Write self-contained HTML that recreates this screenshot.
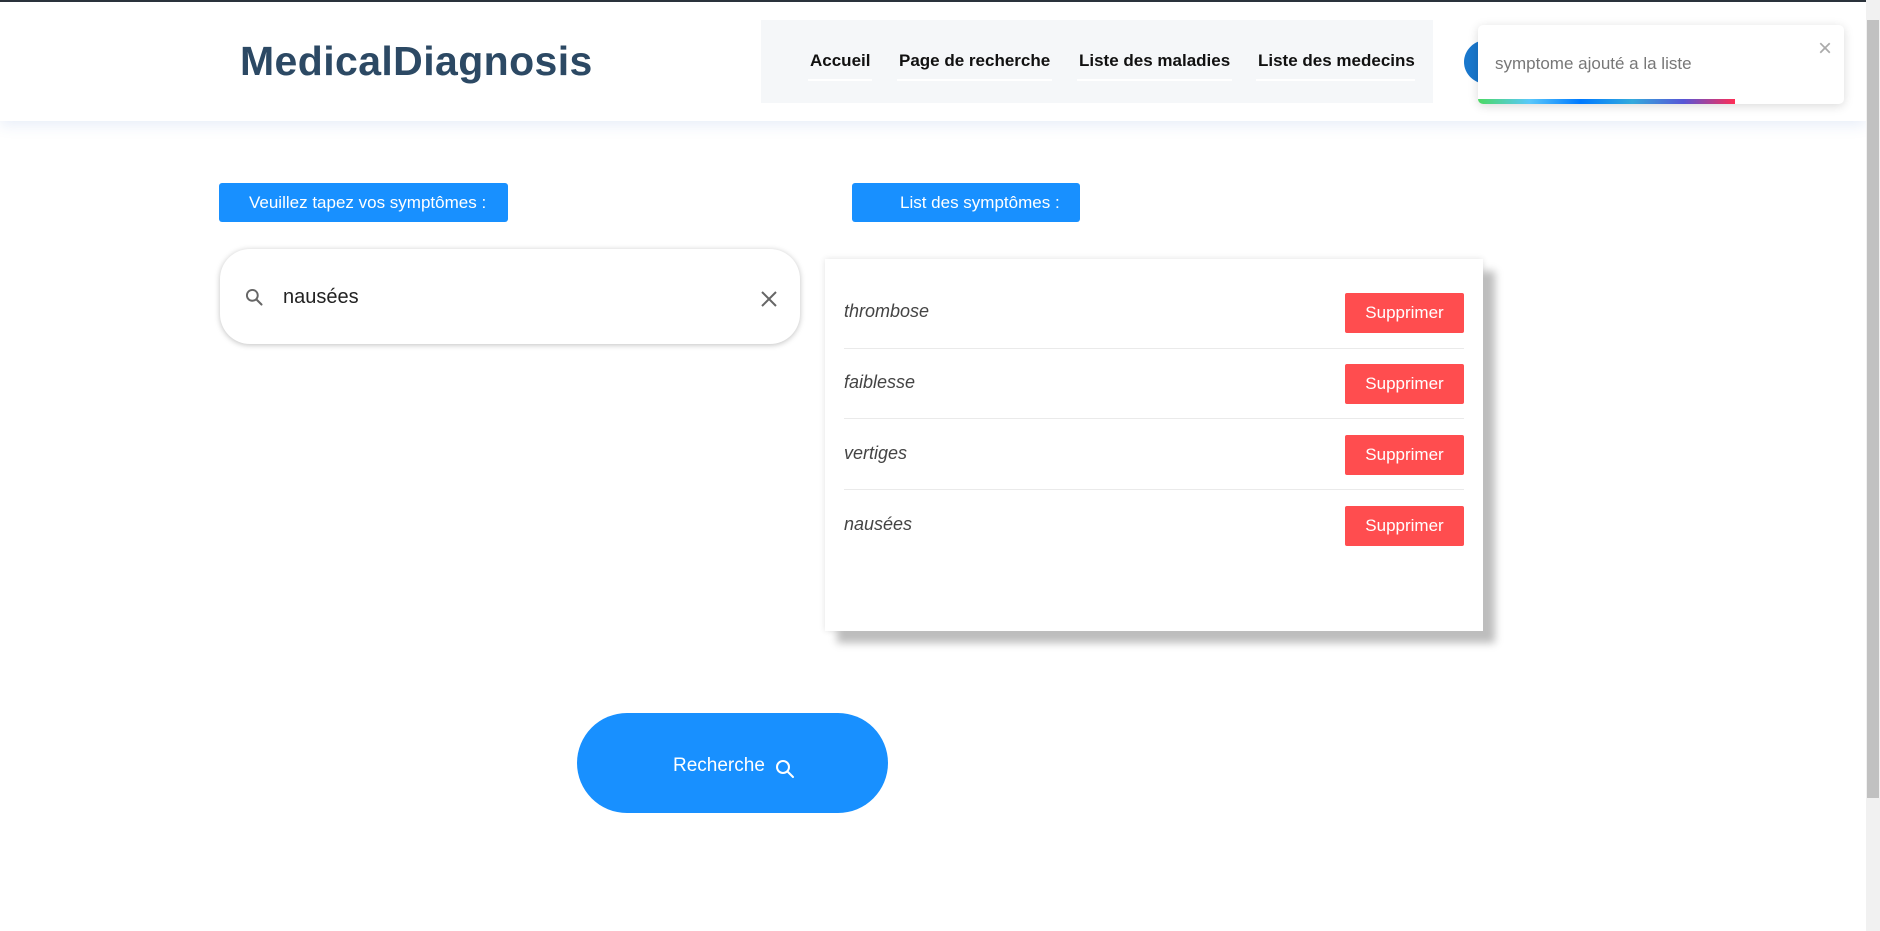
<!DOCTYPE html>
<html><head><meta charset="utf-8">
<style>
*{box-sizing:border-box;margin:0;padding:0}
body{width:1880px;height:931px;overflow:hidden;background:#fff;font-family:"Liberation Sans",sans-serif;position:relative}
.abs{position:absolute}
#topline{left:0;top:0;width:1880px;height:2px;background:#2b3138}
#header{left:0;top:2px;width:1866px;height:119px;background:#fff;box-shadow:0 4px 14px rgba(60,110,200,0.12)}
#logo{left:240px;top:38px;font-size:41px;font-weight:bold;color:#2c4964;letter-spacing:0.4px}
#nav{left:761px;top:20px;width:672px;height:83px;background:#f5f7f9}
.nl{position:absolute;top:31px;font-size:17px;font-weight:bold;color:#111}
.ul{position:absolute;top:59px;height:2px;background:#fff}
#circ{left:1464px;top:40px;width:46px;height:44px;border-radius:50%;background:#1977cc}
#toast{left:1478px;top:25px;width:366px;height:79px;background:#fff;border-radius:5px;box-shadow:0 2px 10px rgba(0,0,0,0.15);overflow:hidden}
#toast .t{position:absolute;left:17px;top:29px;font-size:17px;color:#777}
#toast .x{position:absolute;right:12px;top:10px;font-size:24px;color:#aaa}
#toast .bar{position:absolute;left:0;bottom:0;width:257px;height:5px;background:linear-gradient(90deg,#4cd964,#5ac8fa,#007aff,#34aadc,#5856d6,#ff2d55)}
#sb{left:1866px;top:0;width:14px;height:931px;background:#f1f1f1}
#thumb{left:1867px;top:20px;width:12px;height:778px;background:#c1c1c1}
.lab{position:absolute;top:183px;height:39px;background:#1890ff;color:#fff;font-size:17px;border-radius:3px;line-height:39px}
#search{left:220px;top:249px;width:580px;height:95px;border-radius:30px;background:#fff;box-shadow:0 1px 6px rgba(0,0,0,0.25)}
#card{left:825px;top:259px;width:658px;height:372px;background:#fff;box-shadow:12px 12px 8px #bdbdbd,0 0 6px rgba(0,0,0,0.12)}
.it{position:absolute;left:19px;font-size:18px;font-style:italic;color:#444}
.btn{position:absolute;left:520px;width:119px;height:40px;background:#ff4d4f;color:#fff;font-size:17px;text-align:center;line-height:40px;border-radius:2px}
.hr{position:absolute;left:19px;width:620px;height:1px;background:#eaeaea}
#rech{left:577px;top:713px;width:311px;height:100px;border-radius:50px;background:#1890ff;color:#fff;font-size:19px}
</style></head><body>
<div id="topline" class="abs"></div>
<div id="header" class="abs"></div>
<div id="logo" class="abs">MedicalDiagnosis</div>
<div id="nav" class="abs">
<span class="nl" style="left:49px">Accueil</span>
<span class="nl" style="left:138px">Page de recherche</span>
<span class="nl" style="left:318px">Liste des maladies</span>
<span class="nl" style="left:497px">Liste des medecins</span>
<div class="ul" style="left:47px;width:64px"></div>
<div class="ul" style="left:136px;width:155px"></div>
<div class="ul" style="left:316px;width:155px"></div>
<div class="ul" style="left:495px;width:159px"></div>
</div>
<div id="circ" class="abs"></div>
<div id="toast" class="abs"><span class="t">symptome ajouté a la liste</span><span class="x">×</span><div class="bar"></div></div>
<div id="sb" class="abs"></div><div id="thumb" class="abs"></div>

<div class="lab" style="left:219px;width:289px;padding-left:30px">Veuillez tapez vos symptômes :</div>
<div class="lab" style="left:852px;width:228px;padding-left:48px">List des symptômes :</div>

<div id="search" class="abs">
<svg class="abs" style="left:24px;top:38px" width="20" height="20" viewBox="0 0 24 24"><circle cx="10" cy="10" r="6.5" fill="none" stroke="#666" stroke-width="2.3"/><path d="M15 15l6 6" stroke="#666" stroke-width="2.5" stroke-linecap="round"/></svg>
<span class="abs" style="left:63px;top:37px;font-size:20px;color:#222">nausées</span>
<svg class="abs" style="left:541px;top:42px" width="16" height="16" viewBox="0 0 16 16"><path d="M1 1L15 15M15 1L1 15" stroke="#666" stroke-width="2"/></svg>
</div>

<div id="card" class="abs">
<span class="it" style="top:42px">thrombose</span><div class="btn" style="top:34px">Supprimer</div>
<div class="hr" style="top:89px"></div>
<span class="it" style="top:113px">faiblesse</span><div class="btn" style="top:105px">Supprimer</div>
<div class="hr" style="top:159px"></div>
<span class="it" style="top:184px">vertiges</span><div class="btn" style="top:176px">Supprimer</div>
<div class="hr" style="top:230px"></div>
<span class="it" style="top:255px">nausées</span><div class="btn" style="top:247px">Supprimer</div>
</div>

<div id="rech" class="abs">
<span class="abs" style="left:96px;top:42px">Recherche</span>
<svg class="abs" style="left:198px;top:46px" width="20" height="20" viewBox="0 0 20 20"><circle cx="8" cy="8" r="6" fill="none" stroke="#fff" stroke-width="2"/><path d="M12.5 12.5L18 18" stroke="#fff" stroke-width="2" stroke-linecap="round"/></svg>
</div>
</body></html>
